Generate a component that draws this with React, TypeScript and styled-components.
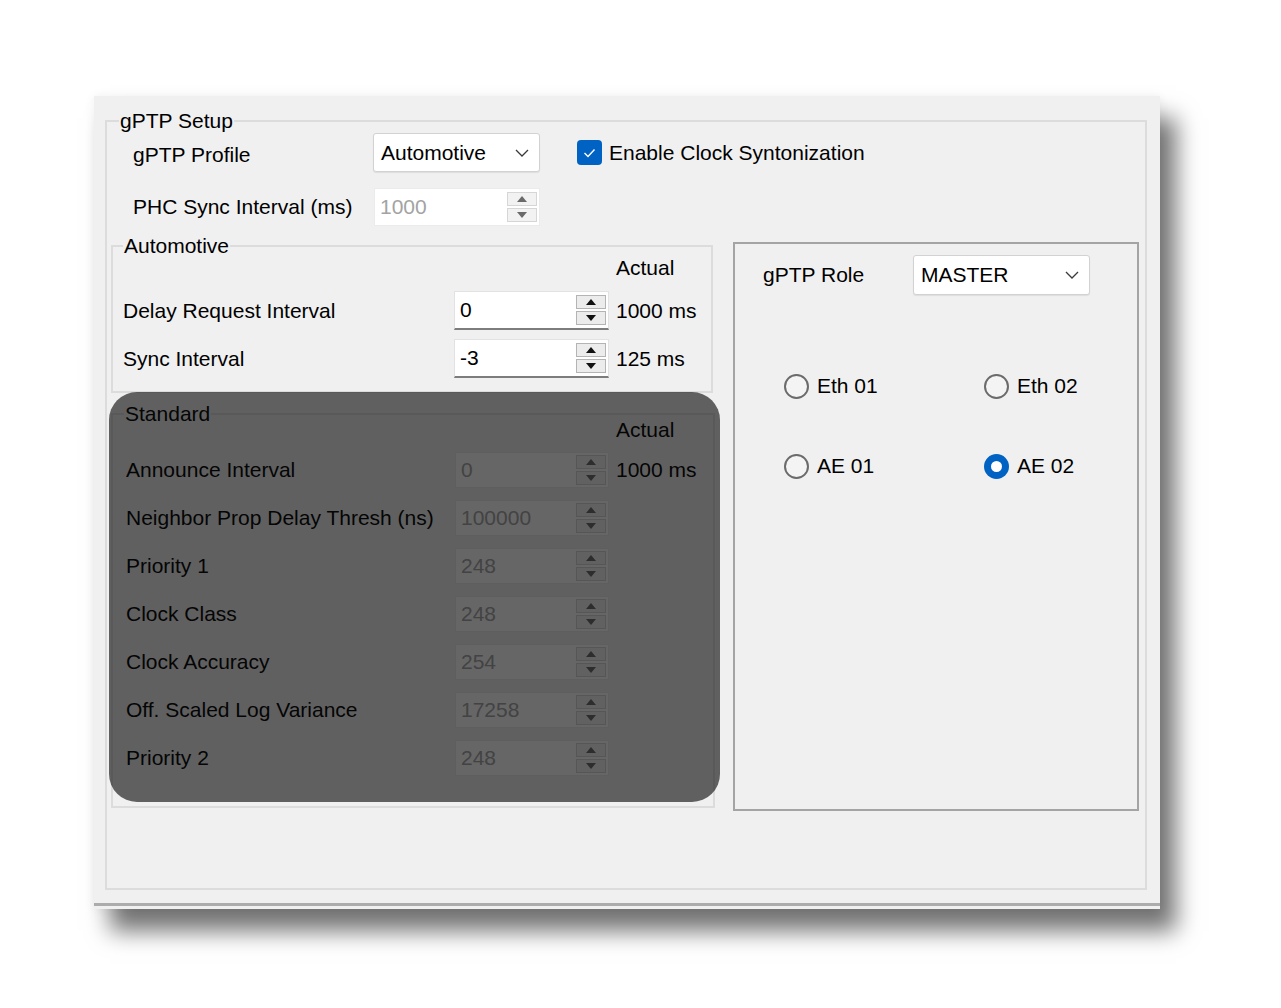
import React from "react";
import styled, { createGlobalStyle } from "styled-components";

const GlobalStyle = createGlobalStyle`
  html, body { margin: 0; padding: 0; background: #ffffff; }
  body { font-family: "Liberation Sans", Arial, sans-serif; color: #000; }
  * { box-sizing: border-box; }
`;

const Page = styled.div`
  width: 1281px;
  height: 1008px;
  padding: 96px 0 0 94px;
  overflow: hidden;
`;

const Window = styled.div`
  width: 1066px;
  height: 813px;
  background: #f0f0f0;
  display: flex;
  flex-direction: column;
  box-shadow: 16px 22px 22px rgba(0, 0, 0, 0.55), 0 0 10px rgba(0, 0, 0, 0.06);
  font-size: 21px;
  line-height: 22px;
`;

const BottomRule = styled.div`
  height: 3px;
  margin-top: 13px;
  background: #acacac;
`;

const GroupBox = styled.div<{ $w: number; $h: number; $dark?: boolean }>`
  position: relative;
  width: ${(p) => p.$w}px;
  height: ${(p) => p.$h}px;
  flex: none;
  border: 2px solid ${(p) => (p.$dark ? "#a4a4a4" : "#dcdcdc")};
`;

const Caption = styled.span<{ $left: number }>`
  position: absolute;
  top: -12px;
  left: ${(p) => p.$left}px;
  padding: 0 1px;
  background: #f0f0f0;
  line-height: 22px;
  white-space: nowrap;
`;

const SetupBox = styled(GroupBox)`
  margin: 24px 0 0 11px;
  padding: 11px 0 0 4px;
`;

const TopRow = styled.div<{ $mt?: number; $pl?: number }>`
  display: flex;
  align-items: center;
  padding-left: ${(p) => p.$pl ?? 22}px;
  margin-top: ${(p) => p.$mt ?? 0}px;
`;

const Label = styled.span<{ $w: number; $drop?: number }>`
  width: ${(p) => p.$w}px;
  flex: none;
  white-space: nowrap;
  padding-top: ${(p) => p.$drop ?? 0}px;
`;

const Select = styled.div<{ $w: number; $h: number }>`
  width: ${(p) => p.$w}px;
  height: ${(p) => p.$h}px;
  flex: none;
  display: flex;
  align-items: center;
  justify-content: space-between;
  padding: 0 10px 0 7px;
  background: #ffffff;
  border: 1px solid #d2d2d2;
  border-radius: 3px;
  box-shadow: 0 1px 1px rgba(0, 0, 0, 0.08);
`;

const Chevron = () => (
  <svg width="14" height="8" viewBox="0 0 14 8">
    <polyline points="1,1 7,7 13,1" fill="none" stroke="#3a3a3a" strokeWidth="1.3" />
  </svg>
);

const CheckWrap = styled.label`
  display: flex;
  align-items: center;
  gap: 7px;
  margin-left: 37px;
  white-space: nowrap;
`;

const CheckBox = styled.span`
  width: 25px;
  height: 25px;
  border-radius: 4px;
  background: #0063c4;
  display: flex;
  align-items: center;
  justify-content: center;
`;

const Spinner = styled.div<{ $w: number; $h: number; $enabled?: boolean }>`
  width: ${(p) => p.$w}px;
  height: ${(p) => p.$h}px;
  flex: none;
  display: flex;
  align-items: center;
  justify-content: space-between;
  padding: 0 2px 0 5px;
  background: #ffffff;
  border: 1px solid ${(p) => (p.$enabled ? "#e2e2e2" : "#ebebeb")};
  border-bottom: ${(p) => (p.$enabled ? "2px solid #7d7d7d" : "1px solid #ebebeb")};
  color: ${(p) => (p.$enabled ? "#000" : "#a3a3a3")};
`;

const SpinButtons = styled.div`
  display: flex;
  flex-direction: column;
  gap: 2px;
`;

const SpinButton = styled.div<{ $enabled?: boolean }>`
  width: 30px;
  height: 14px;
  display: flex;
  align-items: center;
  justify-content: center;
  border: 1px solid ${(p) => (p.$enabled ? "#b4b4b4" : "#d6d6d6")};
  background: ${(p) => (p.$enabled ? "#ececec" : "#f2f2f2")};
`;

const Tri = ({ up, color }: { up?: boolean; color: string }) => (
  <svg width="10" height="6" viewBox="0 0 10 6">
    <polygon points={up ? "0,6 10,6 5,0" : "0,0 10,0 5,6"} fill={color} />
  </svg>
);

const NumBox = ({ value, w, h, enabled }: { value: string; w: number; h: number; enabled?: boolean }) => (
  <Spinner $w={w} $h={h} $enabled={enabled}>
    <span>{value}</span>
    <SpinButtons>
      <SpinButton $enabled={enabled}>
        <Tri up color={enabled ? "#111" : "#6a6a6a"} />
      </SpinButton>
      <SpinButton $enabled={enabled}>
        <Tri color={enabled ? "#111" : "#6a6a6a"} />
      </SpinButton>
    </SpinButtons>
  </Spinner>
);

const BottomArea = styled.div`
  display: flex;
  gap: 18px;
  margin-top: 16px;
`;

const LeftColumn = styled.div`
  position: relative;
  width: 604px;
  display: flex;
  flex-direction: column;
`;

const AutoBox = styled(GroupBox)`
  margin-top: 3px;
  padding: 10px 0 0 10px;
`;

const StdBox = styled(GroupBox)`
  margin-top: 20px;
  padding: 4px 0 0 13px;
`;

const HeaderRow = styled.div<{ $pl: number; $mb: number }>`
  padding-left: ${(p) => p.$pl}px;
  margin-bottom: ${(p) => p.$mb}px;
`;

const ParamList = styled.div<{ $gap: number }>`
  display: flex;
  flex-direction: column;
  gap: ${(p) => p.$gap}px;
`;

const ParamRow = styled.div<{ $labelW: number }>`
  display: grid;
  grid-template-columns: ${(p) => p.$labelW}px auto auto;
  align-items: center;
  justify-content: start;
  white-space: nowrap;
`;

const ActualValue = styled.span<{ $gap: number }>`
  padding-left: ${(p) => p.$gap}px;
`;

const Overlay = styled.div`
  position: absolute;
  left: -2px;
  top: 150px;
  width: 611px;
  height: 410px;
  border-radius: 28px;
  background: rgba(8, 8, 8, 0.62);
`;

const RoleBox = styled(GroupBox)`
  padding: 11px 0 0 28px;
`;

const RadioGrid = styled.div`
  display: grid;
  grid-template-columns: 200px 200px;
  row-gap: 50px;
  margin-top: 76px;
  padding-left: 21px;
`;

const RadioItem = styled.label`
  display: flex;
  align-items: center;
  gap: 8px;
  height: 30px;
  white-space: nowrap;
`;

const RadioCircle = styled.span<{ $checked?: boolean }>`
  width: 25px;
  height: 25px;
  border-radius: 50%;
  flex: none;
  display: flex;
  align-items: center;
  justify-content: center;
  border: ${(p) => (p.$checked ? "none" : "2px solid #6b6b6b")};
  background: ${(p) => (p.$checked ? "#0063c4" : "#f4f4f4")};
  &::after {
    content: "";
    display: ${(p) => (p.$checked ? "block" : "none")};
    width: 11px;
    height: 11px;
    border-radius: 50%;
    background: #ffffff;
  }
`;

const autoRows = [
  { label: "Delay Request Interval", value: "0", actual: "1000 ms" },
  { label: "Sync Interval", value: "-3", actual: "125 ms" },
];

const stdRows = [
  { label: "Announce Interval", value: "0", actual: "1000 ms" },
  { label: "Neighbor Prop Delay Thresh (ns)", value: "100000", actual: "" },
  { label: "Priority 1", value: "248", actual: "" },
  { label: "Clock Class", value: "248", actual: "" },
  { label: "Clock Accuracy", value: "254", actual: "" },
  { label: "Off. Scaled Log Variance", value: "17258", actual: "" },
  { label: "Priority 2", value: "248", actual: "" },
];

const radios = [
  { label: "Eth 01", checked: false },
  { label: "Eth 02", checked: false },
  { label: "AE 01", checked: false },
  { label: "AE 02", checked: true },
];

export default function App() {
  return (
    <>
      <GlobalStyle />
      <Page>
        <Window>
          <SetupBox $w={1042} $h={770}>
            <Caption $left={12}>gPTP Setup</Caption>
            <TopRow>
              <Label $w={240} $drop={4}>gPTP Profile</Label>
              <Select $w={167} $h={39}>
                <span>Automotive</span>
                <Chevron />
              </Select>
              <CheckWrap>
                <CheckBox>
                  <svg width="13" height="10" viewBox="0 0 13 10">
                    <polyline points="1.5,5 5,8.5 11.5,1.5" fill="none" stroke="#fff" strokeWidth="1.4" />
                  </svg>
                </CheckBox>
                Enable Clock Syntonization
              </CheckWrap>
            </TopRow>
            <TopRow $mt={16}>
              <Label $w={241}>PHC Sync Interval (ms)</Label>
              <NumBox value="1000" w={166} h={38} />
            </TopRow>
            <BottomArea>
              <LeftColumn>
                <AutoBox $w={602} $h={148}>
                  <Caption $left={10}>Automotive</Caption>
                  <HeaderRow $pl={493} $mb={12}>Actual</HeaderRow>
                  <ParamList $gap={9}>
                    {autoRows.map((r) => (
                      <ParamRow key={r.label} $labelW={331}>
                        <span>{r.label}</span>
                        <NumBox value={r.value} w={155} h={39} enabled />
                        <ActualValue $gap={7}>{r.actual}</ActualValue>
                      </ParamRow>
                    ))}
                  </ParamList>
                </AutoBox>
                <StdBox $w={604} $h={395}>
                  <Caption $left={11}>Standard</Caption>
                  <HeaderRow $pl={490} $mb={11}>Actual</HeaderRow>
                  <ParamList $gap={12}>
                    {stdRows.map((r) => (
                      <ParamRow key={r.label} $labelW={329}>
                        <span>{r.label}</span>
                        <NumBox value={r.value} w={154} h={36} />
                        <ActualValue $gap={7}>{r.actual}</ActualValue>
                      </ParamRow>
                    ))}
                  </ParamList>
                </StdBox>
                <Overlay />
              </LeftColumn>
              <RoleBox $w={406} $h={569} $dark>
                <TopRow $pl={0}>
                  <Label $w={150}>gPTP Role</Label>
                  <Select $w={177} $h={40}>
                    <span>MASTER</span>
                    <Chevron />
                  </Select>
                </TopRow>
                <RadioGrid>
                  {radios.map((r) => (
                    <RadioItem key={r.label}>
                      <RadioCircle $checked={r.checked} />
                      {r.label}
                    </RadioItem>
                  ))}
                </RadioGrid>
              </RoleBox>
            </BottomArea>
          </SetupBox>
          <BottomRule />
        </Window>
      </Page>
    </>
  );
}
